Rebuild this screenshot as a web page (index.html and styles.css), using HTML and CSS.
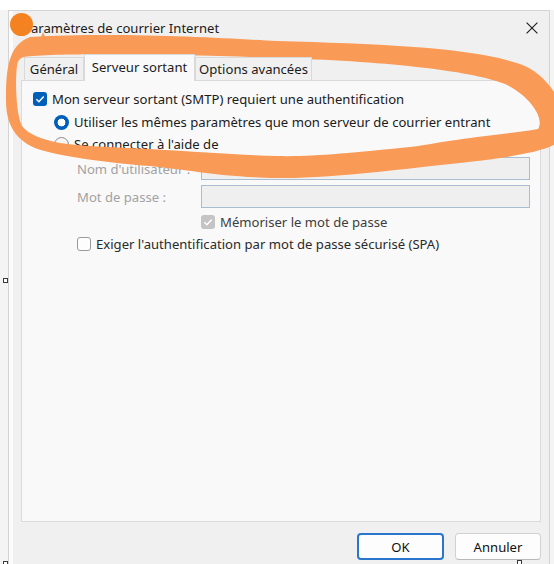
FILE: index.html
```html
<!DOCTYPE html>
<html lang="fr">
<head>
<meta charset="utf-8">
<title>Paramètres de courrier Internet</title>
<link rel="stylesheet" href="styles.css">
</head>
<body>
<div class="screen">
  <div class="dialog">
    <div class="titlebar">
      <span class="title">Paramètres de courrier Internet</span>
      <svg class="close" width="12" height="12" viewBox="0 0 12 12"><path d="M0.6 0.6L11.4 11.4M11.4 0.6L0.6 11.4" stroke="#1f1f1f" stroke-width="1.15" fill="none"/></svg>
    </div>
    <div class="tabs">
      <div class="tab tab-general">Général</div>
      <div class="tab tab-active tab-server">Serveur sortant</div>
      <div class="tab tab-options">Options avancées</div>
    </div>
    <div class="panel">
      <div class="row row-1">
        <span class="box box-checked"><svg width="14" height="14" viewBox="0 0 14 14"><path d="M3.4 7.3L5.9 9.7L10.7 4.6" stroke="#fff" stroke-width="1.5" fill="none"/></svg></span>
        <span class="label">Mon serveur sortant (SMTP) requiert une authentification</span>
      </div>
      <div class="row row-2">
        <span class="radio radio-checked"></span>
        <span class="label">Utiliser les mêmes paramètres que mon serveur de courrier entrant</span>
      </div>
      <div class="row row-3">
        <span class="radio"></span>
        <span class="label">Se connecter à l'aide de</span>
      </div>
      <div class="row row-4">
        <span class="field-label">Nom d'utilisateur :</span>
        <span class="input"></span>
      </div>
      <div class="row row-5">
        <span class="field-label">Mot de passe :</span>
        <span class="input"></span>
      </div>
      <div class="row row-6">
        <span class="box box-disabled"><svg width="14" height="14" viewBox="0 0 14 14"><path d="M3.4 7.3L5.9 9.7L10.7 4.6" stroke="#fff" stroke-width="1.5" fill="none"/></svg></span>
        <span class="label label-dim">Mémoriser le mot de passe</span>
      </div>
      <div class="row row-7">
        <span class="box"></span>
        <span class="label label-mid">Exiger l'authentification par mot de passe sécurisé (SPA)</span>
      </div>
    </div>
    <div class="footer">
      <button class="btn btn-ok">OK</button>
      <button class="btn btn-cancel">Annuler</button>
    </div>
  </div>

  <svg class="scribble" width="554" height="564" viewBox="0 0 554 564">
    <path fill="#fa9a57" fill-rule="evenodd" d="M 30 37 C 120 32, 220 38, 277 41 C 380 44, 470 47, 520 64 C 548 74, 572 108, 560 140 C 552 152, 500 158, 477 161 C 420 167, 330 179, 277 178 C 220 177, 190 170, 150 166 C 110 163, 60 157, 35 148 C 12 138, 6 120, 6 100 C 6 70, 8 45, 30 37 Z M 24 57 C 60 52, 200 55, 277 58 C 380 61, 470 70, 505 84 C 530 96, 545 118, 538 129 C 520 132, 500 134, 477 137 C 440 142, 420 146, 410 147 C 350 153, 310 157, 277 156 C 240 155, 200 152, 150 149 C 110 147, 80 146, 60 143 C 40 139, 28 134, 22 126 C 16 115, 15 80, 17 66 C 18 60, 20 58, 24 57 Z"/>
    <path fill="#fa9a57" d="M 38 46 L 43 32 L 49 46 Z"/>
    <circle cx="21.5" cy="24.5" r="11.5" fill="#f58220"/>
  </svg>

  <span class="handle handle-a"></span>
  <span class="handle handle-b"></span>
  <span class="handle handle-c"></span>
</div>
</body>
</html>
```

FILE: styles.css
```css
* {
  box-sizing: border-box;
}

html,
body {
  margin: 0;
  padding: 0;
}

body {
  width: 554px;
  height: 564px;
  overflow: hidden;
  font-family: "Noto Sans", "Open Sans", sans-serif;
  font-size: 13.1px;
  color: #1b1b1b;
}

.screen {
  position: relative;
  width: 554px;
  height: 564px;
  overflow: hidden;
  padding-top: 10px;
  padding-left: 8px;
  background: linear-gradient(#ffffff 0, #ffffff 10px, #f4f4f4 10px);
}

.dialog {
  width: 542px;
  height: 554px;
  background: #f0f0f0;
  border: 1px solid #d3d3d3;
  border-bottom: none;
  box-shadow: inset 4px 0 0 0 #fbfbfb;
  display: flex;
  flex-direction: column;
}

.titlebar {
  height: 34px;
  flex: none;
  display: flex;
  align-items: center;
  justify-content: space-between;
  padding-left: 14px;
  padding-right: 11px;
}

.title {
  color: #1b1b1b;
  white-space: nowrap;
}

.close {
  display: block;
}

.tabs {
  position: relative;
  z-index: 1;
  flex: none;
  height: 27px;
  margin-top: 9px;
  margin-bottom: -1px;
  padding-left: 15px;
  display: flex;
  align-items: flex-end;
}

.tab {
  height: 23px;
  margin-bottom: 1px;
  border: 1px solid #d9d9d9;
  border-bottom: none;
  background: #f0f0f0;
  display: flex;
  align-items: center;
  justify-content: center;
  white-space: nowrap;
}

.tab-active {
  height: 27px;
  margin-bottom: 0;
  padding-bottom: 2px;
  background: #f9f9f9;
}

.tab-general {
  width: 60px;
}

.tab-server {
  width: 111px;
}

.tab-options {
  width: 117px;
}

.panel {
  flex: none;
  margin-left: 12px;
  width: 520px;
  height: 442px;
  border: 1px solid #dadada;
  background: #f9f9f9;
  padding-top: 7px;
  display: flex;
  flex-direction: column;
}

.row {
  display: flex;
  align-items: center;
  flex: none;
  white-space: nowrap;
}

.row-1 {
  height: 22px;
  padding-left: 11px;
}

.row-2 {
  height: 22px;
  margin-top: 1px;
  padding-left: 32px;
}

.row-3 {
  height: 22px;
  padding-left: 32px;
}

.row-4 {
  height: 23px;
  margin-top: 2px;
  padding-left: 55px;
}

.row-5 {
  height: 23px;
  margin-top: 5px;
  padding-left: 55px;
}

.row-6 {
  height: 21px;
  margin-top: 3px;
  padding-left: 179px;
}

.row-7 {
  height: 21px;
  margin-top: 1px;
  padding-left: 55px;
}

.box {
  flex: none;
  width: 14px;
  height: 14px;
  margin-right: 5px;
  border-radius: 3px;
  border: 1px solid #9a9a9a;
  background: #fdfdfd;
  display: flex;
  align-items: center;
  justify-content: center;
}

.box svg {
  display: block;
}

.box-checked {
  border: none;
  background: #005fb8;
}

.box-disabled {
  border: none;
  background: #c4c4c4;
}

.radio {
  flex: none;
  width: 15px;
  height: 15px;
  margin-right: 5px;
  border-radius: 50%;
  border: 1px solid #8c8c8c;
  background: #f6f6f6;
}

.radio-checked {
  border: none;
  background: radial-gradient(circle, #ffffff 0, #ffffff 3.6px, #005fb8 4.2px);
}

.label {
  color: #1b1b1b;
}

.label-dim {
  color: #3d3d3d;
}

.label-mid {
  color: #2a2a2a;
}

.field-label {
  width: 124px;
  flex: none;
  color: #a2a2a2;
}

.input {
  flex: none;
  width: 329px;
  height: 23px;
  border: 1px solid #a9bcd0;
  background: #efefef;
}

.footer {
  flex: none;
  display: flex;
  justify-content: flex-end;
  gap: 11px;
  padding-top: 11px;
  padding-right: 8px;
}

.btn {
  height: 27px;
  padding: 0;
  border-radius: 4px;
  font-family: inherit;
  font-size: 13.1px;
  color: #111111;
  background: #fdfdfd;
  border: 1px solid #d1d1d1;
  border-bottom-color: #b9b9b9;
}

.btn-ok {
  width: 87px;
  border: 2px solid #2a76cc;
}

.btn-cancel {
  width: 86px;
}

.scribble {
  position: absolute;
  left: 0;
  top: 0;
  pointer-events: none;
}

.handle {
  position: absolute;
  width: 5px;
  height: 5px;
  border: 1px solid #3a3a3a;
  background: #ffffff;
}

.handle-a {
  left: 3px;
  top: 278px;
}

.handle-b {
  left: 3px;
  top: 561px;
}

.handle-c {
  left: 517px;
  top: 560px;
}
```
